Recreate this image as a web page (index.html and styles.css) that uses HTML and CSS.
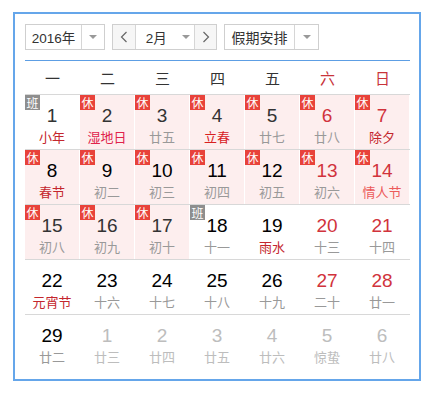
FILE: index.html
```html
<!DOCTYPE html>
<html lang="zh">
<head>
<meta charset="utf-8">
<link rel="stylesheet" href="styles.css">
</head>
<body>
<div class="cal">
  <div class="toolbar">
    <div class="sel year"><span class="txt">2016年</span><span class="arr"><i></i></span></div>
    <div class="sel month">
      <span class="nav"><svg width="8" height="12" viewBox="0 0 8 12"><path d="M6.5 1 L1.5 6 L6.5 11" fill="none" stroke="#666" stroke-width="1.2"/></svg></span>
      <span class="txt">2月</span><span class="arr"><i></i></span>
      <span class="nav next"><svg width="8" height="12" viewBox="0 0 8 12"><path d="M1.5 1 L6.5 6 L1.5 11" fill="none" stroke="#666" stroke-width="1.2"/></svg></span>
    </div>
    <div class="sel hol"><span class="txt">假期安排</span><span class="arr"><i></i></span></div>
  </div>
  <div class="week">
    <span>一</span><span>二</span><span>三</span><span>四</span><span>五</span><span class="we">六</span><span class="we">日</span>
  </div>
  <div class="grid">
    <div class="row">
      <div class="cell"><b class="tag ban">班</b><span class="num dk">1</span><span class="ln fes">小年</span></div>
      <div class="cell rest"><b class="tag">休</b><span class="num dk">2</span><span class="ln fes2">湿地日</span></div>
      <div class="cell rest"><b class="tag">休</b><span class="num dk">3</span><span class="ln">廿五</span></div>
      <div class="cell rest"><b class="tag">休</b><span class="num dk">4</span><span class="ln fes3">立春</span></div>
      <div class="cell rest"><b class="tag">休</b><span class="num dk">5</span><span class="ln">廿七</span></div>
      <div class="cell rest"><b class="tag">休</b><span class="num red">6</span><span class="ln">廿八</span></div>
      <div class="cell rest"><b class="tag">休</b><span class="num red">7</span><span class="ln fes">除夕</span></div>
    </div>
    <div class="row">
      <div class="cell rest"><b class="tag">休</b><span class="num">8</span><span class="ln fes">春节</span></div>
      <div class="cell rest"><b class="tag">休</b><span class="num">9</span><span class="ln">初二</span></div>
      <div class="cell rest"><b class="tag">休</b><span class="num">10</span><span class="ln">初三</span></div>
      <div class="cell rest"><b class="tag">休</b><span class="num">11</span><span class="ln">初四</span></div>
      <div class="cell rest"><b class="tag">休</b><span class="num">12</span><span class="ln">初五</span></div>
      <div class="cell rest"><b class="tag">休</b><span class="num red">13</span><span class="ln">初六</span></div>
      <div class="cell rest"><b class="tag">休</b><span class="num red">14</span><span class="ln fes4">情人节</span></div>
    </div>
    <div class="row">
      <div class="cell rest"><b class="tag">休</b><span class="num dk">15</span><span class="ln">初八</span></div>
      <div class="cell rest"><b class="tag">休</b><span class="num dk">16</span><span class="ln">初九</span></div>
      <div class="cell rest"><b class="tag">休</b><span class="num dk">17</span><span class="ln">初十</span></div>
      <div class="cell"><b class="tag ban">班</b><span class="num">18</span><span class="ln">十一</span></div>
      <div class="cell"><span class="num">19</span><span class="ln fes">雨水</span></div>
      <div class="cell"><span class="num red">20</span><span class="ln">十三</span></div>
      <div class="cell"><span class="num red">21</span><span class="ln">十四</span></div>
    </div>
    <div class="row">
      <div class="cell"><span class="num">22</span><span class="ln fes">元宵节</span></div>
      <div class="cell"><span class="num">23</span><span class="ln">十六</span></div>
      <div class="cell"><span class="num">24</span><span class="ln">十七</span></div>
      <div class="cell"><span class="num">25</span><span class="ln">十八</span></div>
      <div class="cell"><span class="num">26</span><span class="ln">十九</span></div>
      <div class="cell"><span class="num red">27</span><span class="ln">二十</span></div>
      <div class="cell"><span class="num red">28</span><span class="ln">廿一</span></div>
    </div>
    <div class="row">
      <div class="cell"><span class="num">29</span><span class="ln">廿二</span></div>
      <div class="cell out"><span class="num">1</span><span class="ln">廿三</span></div>
      <div class="cell out"><span class="num">2</span><span class="ln">廿四</span></div>
      <div class="cell out"><span class="num">3</span><span class="ln">廿五</span></div>
      <div class="cell out"><span class="num">4</span><span class="ln">廿六</span></div>
      <div class="cell out"><span class="num">5</span><span class="ln">惊蛰</span></div>
      <div class="cell out"><span class="num">6</span><span class="ln">廿八</span></div>
    </div>
  </div>
</div>
</body>
</html>
```
FILE: styles.css
```css
html, body { margin: 0; padding: 0; background: #fff; }
body {
  font-family: "Liberation Sans", Arial, "Noto Sans CJK SC", sans-serif;
  padding: 12px 0 0 13px;
}
.cal {
  width: 394px;
  height: 355px;
  border: 2px solid #65a6ea;
  padding: 10px 0 0 10px;
  box-sizing: content-box;
}
.toolbar { display: flex; gap: 7px; height: 26px; }
.sel {
  display: flex;
  height: 26px;
  box-sizing: border-box;
  border: 1px solid #cfcfcf;
  background: #fff;
  font-size: 13.5px;
  color: #333;
}
.sel .txt { display: flex; align-items: center; justify-content: center; }
.sel .arr {
  display: flex; align-items: center; justify-content: center;
  border-left: 1px solid #d6d6d6;
}
.sel .arr i {
  width: 0; height: 0;
  border-left: 4px solid transparent;
  border-right: 4px solid transparent;
  border-top: 4px solid #999;
}
.year { width: 80px; }
.year .txt { width: 55px; }
.year .arr { flex: 1; }
.month { width: 105px; }
.month .nav {
  width: 22px; display: flex; align-items: center; justify-content: center;
  background: #f6f6f6; border-right: 1px solid #d6d6d6;
}
.month .nav.next { border-right: 0; border-left: 1px solid #d6d6d6; width: 21px; }
.month .txt { width: 33px; justify-content: flex-start; padding-left: 10px; }
.month .arr { border-left: 0; width: 16px; }
.hol { width: 95px; }
.hol .txt { width: 69px; font-size: 14px; }
.hol .arr { flex: 1; }

.week {
  margin-top: 10px;
  width: 385px;
  border-top: 1px solid #5d9ee4;
  display: grid;
  grid-template-columns: repeat(7, 55px);
  height: 33px;
  align-items: center;
  font-family: "Noto Sans CJK SC", sans-serif;
  font-size: 15px;
  color: #333;
}
.week span { text-align: center; line-height: 33px; }
.week .we { color: #c8343a; }

.grid { width: 385px; }
.row {
  display: grid;
  grid-template-columns: repeat(7, 55px);
  border-top: 1px solid #d8d8d8;
  height: 54px;
}
.cell {
  position: relative;
  display: flex;
  flex-direction: column;
  align-items: center;
  padding-top: 10px;
  box-sizing: border-box;
  border-right: 1px solid #fff;
}
.cell.rest { background: #fdeeee; }
.tag {
  position: absolute; left: 0; top: 0;
  width: 15px; height: 15px;
  background: #e8423a; color: #fff;
  font-family: "Noto Sans CJK SC", sans-serif;
  font-weight: normal;
  font-size: 12px; line-height: 15px; text-align: center;
}
.tag.ban { background: #8e8e8e; }
.num {
  font-size: 19px; line-height: 22px; color: #000;
}
.num.dk { color: #333; }
.num.red { color: #d1333c; }
.ln {
  font-family: "Noto Sans CJK SC", sans-serif;
  font-size: 13px; line-height: 18px; color: #999;
  margin-top: 1px;
}
.ln.fes { color: #c4262d; }
.ln.fes2 { color: #e0234b; }
.ln.fes3 { color: #d8201f; }
.ln.fes4 { color: #ec5a5a; }
.out .num, .out .ln { color: #bdbdbd; }
```
